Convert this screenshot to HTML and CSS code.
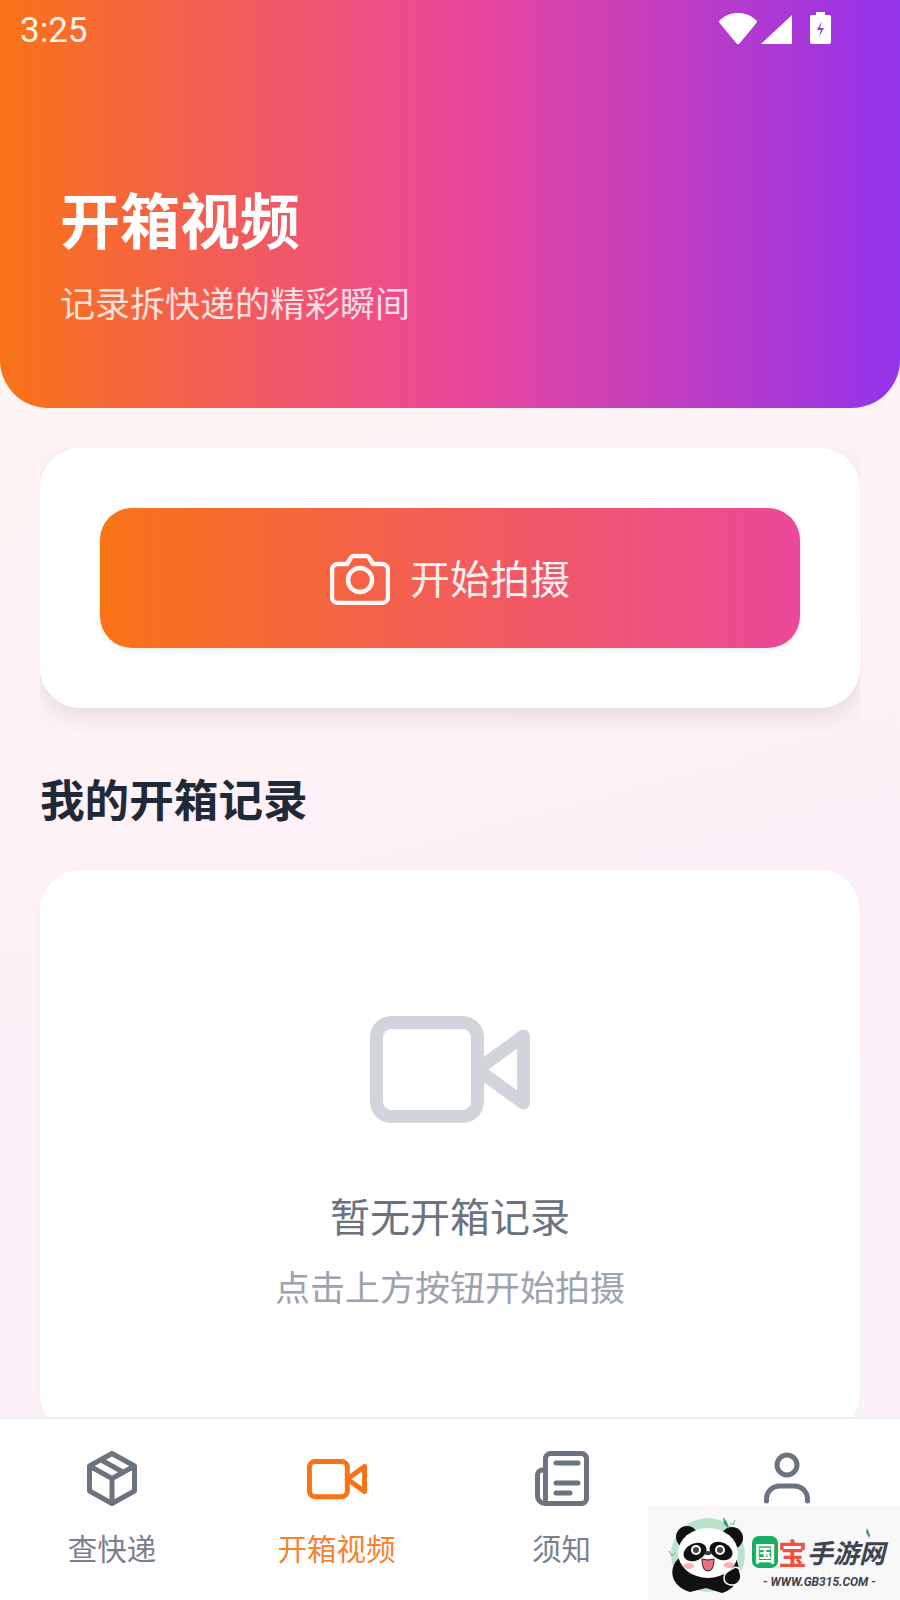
FILE: index.html
```html
<!DOCTYPE html>
<html lang="zh-CN">
<head>
<meta charset="utf-8">
<title>开箱视频</title>
<link rel="stylesheet" href="styles.css">
</head>
<body>
<div class="app">
  <header class="hero">
    <div class="status">
      <span class="time">3:25</span>
      <div class="status-icons">
        <svg class="ic-wifi" viewBox="0 0 38 32"><path d="M1 10.500C-.5 9 0 8 1 7 6 2.500 12 0 19 0s13 2.500 18 7c1 1 1.500 2 0 3.500L20.500 30.500c-.8 1-2.200 1-3 0z"/></svg>
        <svg class="ic-signal" viewBox="0 0 31 29"><path d="M31 0v29H0z"/></svg>
        <svg class="ic-battery" viewBox="0 0 21 32"><path class="bat" d="M6 0h9v3h4a2 2 0 0 1 2 2v25a2 2 0 0 1-2 2H2a2 2 0 0 1-2-2V5a2 2 0 0 1 2-2h4z"/><path class="bolt" d="M12 9l-5 9h4l-2 7 5-9h-4z"/></svg>
      </div>
    </div>
    <h1 class="hero-title">开箱视频</h1>
    <p class="hero-sub">记录拆快递的精彩瞬间</p>
  </header>

  <main class="content">
    <div class="clip">
      <section class="card action-card">
        <div class="shoot">
          <svg class="ic-camera" viewBox="0 0 60 52"><path d="M8 11H17L21 4.500a3 3 0 0 1 2.500-1.500H36.500a3 3 0 0 1 2.500 1.500L43 11H52a6 6 0 0 1 6 6V44a6 6 0 0 1-6 6H8a6 6 0 0 1-6-6V17a6 6 0 0 1 6-6z"/><circle cx="30" cy="27" r="12"/></svg>
          <span class="shoot-text">开始拍摄</span>
        </div>
      </section>
    </div>
    <h2 class="section-title">我的开箱记录</h2>
    <section class="card empty-card">
      <svg class="ic-video-lg" viewBox="0 0 160 107"><rect x="6.500" y="6.500" width="101" height="94" rx="15"/><path d="M107.500 53.500L153.500 20V87z"/></svg>
      <p class="empty-title">暂无开箱记录</p>
      <p class="empty-sub">点击上方按钮开始拍摄</p>
    </section>
  </main>

  <nav class="tabs">
    <div class="tab">
      <svg class="tab-icon" viewBox="0 0 60 60"><path d="M30 4.500L52.500 17V42L30 54.500L7.500 42V17zM30 29.500L52.500 17M30 29.500L7.500 17M30 29.500V54.500M18.750 10.750L41.250 23.250"/></svg>
      <span class="tab-label">查快递</span>
    </div>
    <div class="tab active">
      <svg class="tab-icon" viewBox="0 0 60 60"><g transform="translate(0 10) scale(.375)"><rect x="6.500" y="6.500" width="101" height="94" rx="15"/><path d="M107.500 53.500L153.500 20V87z"/></g></svg>
      <span class="tab-label">开箱视频</span>
    </div>
    <div class="tab">
      <svg class="tab-icon" viewBox="0 0 60 60"><path d="M13.500 50V9.500a5 5 0 0 1 5-5H49.500a5 5 0 0 1 5 5V49.500a5 5 0 0 1-5 5H13a7.500 7.500 0 0 1-7.500-7.500V26a5 5 0 0 1 5-5h3M24 14H46M24 34H46M24 44H38"/></svg>
      <span class="tab-label">须知</span>
    </div>
    <div class="tab">
      <svg class="tab-icon" viewBox="0 0 60 60"><circle cx="30" cy="16" r="10"/><path d="M9.500 52V50a13 13 0 0 1 13-13H37.500a13 13 0 0 1 13 13v2"/></svg>
    </div>
  </nav>

  <aside class="mark">
    <svg class="panda" viewBox="0 0 100 94">
      <circle class="ring" cx="60" cy="49" r="37"/>
      <path class="blk" d="M31 52C20 62 22 80 42 86l16-4 16 5c18-5 20-24 13-36z"/>
      <circle class="blk" cx="39" cy="31" r="11"/>
      <circle class="blk" cx="84" cy="32" r="11"/>
      <ellipse class="wht" cx="60" cy="47" rx="30" ry="25"/>
      <ellipse class="blk" cx="47" cy="46" rx="12" ry="8.500" transform="rotate(-25 47 46)"/>
      <ellipse class="blk" cx="73" cy="45" rx="12" ry="8.500" transform="rotate(25 73 45)"/>
      <circle class="wht" cx="48" cy="44" r="5"/>
      <circle class="wht" cx="72" cy="44" r="5"/>
      <circle class="eye" cx="48" cy="44" r="3"/>
      <circle class="eye" cx="72" cy="44" r="3"/>
      <ellipse class="nose" cx="60" cy="47" rx="3.500" ry="2"/>
      <path class="mouth" d="M54 53q6 2 12 0q0 12-6 12t-6-12z"/>
      <ellipse class="cheek" cx="41" cy="60" rx="5.500" ry="3"/>
      <ellipse class="cheek" cx="81" cy="59" rx="5.500" ry="3"/>
      <path class="paw" d="M76 72c0-6 5-7 8-9 3-3 8-2 8 3 2 5 1 8-2 11-5 4-14 2-14-5z"/>
      <path class="leaf" d="M79 16l-4-5 1 7 5 5z"/>
      <path class="twig" d="M87 14l-2 5-3-2M21 45l3 5 3-3"/>
    </svg>
    <div class="brand">
      <div class="brand-top">
        <span class="brand-box">国</span><span class="brand-red">宝</span><span class="brand-dark">手游网</span>
      </div>
      <div class="brand-url">- WWW.GB315.COM -</div>
    </div>
    <svg class="sprig" viewBox="0 0 16 14"><path d="M2 0l3 7-1 3-3-6z"/></svg>
  </aside>
</div>
</body>
</html>
```

FILE: styles.css
```css
* { box-sizing: border-box; }
html, body { margin: 0; padding: 0; }
body { font-family: "Noto Sans CJK SC", "Noto Sans", sans-serif; }
h1, h2, p { margin: 0; }

.app {
  position: relative;
  width: 900px;
  height: 1600px;
  overflow: hidden;
  display: flex;
  flex-direction: column;
  background: linear-gradient(165deg, #fff7f0, #fdf1f8 55%, #faf1fb);
}

.hero {
  flex: none;
  height: 408px;
  color: #fff;
  background: linear-gradient(90deg, #f97316, #ec4899 50%, #9333ea);
  border-radius: 0 0 48px 48px;
}
.status {
  height: 60px;
  padding: 10px 69px 0 20px;
  display: flex;
  justify-content: space-between;
}
.time { font: 400 35px/42px Roboto, sans-serif; opacity: .92; }
.status-icons { display: flex; align-items: flex-start; padding-top: 2px; }
.status-icons svg { fill: #fff; display: block; }
.ic-wifi { width: 38px; height: 32px; margin-top: 1px; }
.ic-signal { width: 31px; height: 29px; margin: 3px 0 0 4px; }
.ic-battery { width: 21px; height: 32px; margin-left: 18px; }
.status-icons .bolt { fill: #9a3ad8; }

.hero-title {
  margin: 118px 0 0 60px;
  font-size: 60px;
  line-height: 80px;
  font-weight: 700;
}
.hero-sub {
  margin: 19px 0 0 60px;
  font-size: 35px;
  line-height: 50px;
  opacity: .8;
}

.content {
  flex: 1;
  min-height: 0;
  overflow: hidden;
  padding: 40px 40px 0;
}
.clip { overflow: clip; padding-bottom: 24px; }
.card { background: #fff; border-radius: 40px; }
.action-card {
  padding: 60px;
  box-shadow: 0 8px 24px rgba(0, 0, 0, .1);
}
.shoot {
  height: 140px;
  border-radius: 32px;
  display: flex;
  align-items: center;
  justify-content: center;
  gap: 20px;
  color: #fff;
  font-size: 40px;
  background: linear-gradient(90deg, #f97316, #ec4899);
  box-shadow: 0 2px 6px rgba(0, 0, 0, .08);
}
.shoot-text { opacity: .9; padding-bottom: 2px; }
.ic-camera { width: 60px; height: 52px; margin-top: 1px; fill: none; stroke: #fff; stroke-width: 4.500; stroke-linejoin: round; opacity: .95; }

.section-title {
  margin-top: 36px;
  font-size: 44.600px;
  line-height: 60px;
  font-weight: 700;
  color: #1f2937;
}

.empty-card {
  margin-top: 42px;
  height: 565px;
  padding-top: 146px;
  display: flex;
  flex-direction: column;
  align-items: center;
  box-shadow: 0 1px 4px rgba(0, 0, 0, .03);
}
.ic-video-lg { width: 160px; height: 107px; fill: none; stroke: #d1d5db; stroke-width: 13; stroke-linejoin: round; }
.empty-title { margin-top: 64px; font-size: 40px; line-height: 56px; color: #6b7280; }
.empty-sub { margin-top: 18px; font-size: 35px; line-height: 50px; color: #9ca3af; }

.tabs {
  flex: none;
  height: 183px;
  background: #fff;
  border-top: 2px solid #eceef1;
  display: grid;
  grid-template-columns: 224px 225px 225px 226px;
}
.tab {
  padding-top: 30px;
  display: flex;
  flex-direction: column;
  align-items: center;
  color: #6b7280;
}
.tab-icon {
  width: 60px;
  height: 60px;
  fill: none;
  stroke: #6b7280;
  stroke-width: 5;
  stroke-linecap: round;
  stroke-linejoin: round;
}
.tab-label { margin-top: 18px; font-size: 29.500px; line-height: 40px; opacity: .9; }
.tab.active { color: #f97316; }
.tab.active .tab-icon { stroke: #f97316; }
.tab.active .tab-icon g { stroke-width: 13.300; }

.mark {
  position: absolute;
  right: 0;
  bottom: 0;
  width: 252px;
  height: 94px;
  background: #f8f8f8;
  display: flex;
}
.panda { width: 100px; height: 94px; flex: none; }
.panda .ring { fill: #b9e3ce; }
.panda .blk { fill: #111; }
.panda .wht { fill: #fff; }
.panda .eye { fill: #444; }
.panda .nose { fill: #3a3a3a; }
.panda .mouth { fill: #ee6f77; stroke: #222; stroke-width: 1; }
.panda .cheek { fill: #f8b4b0; }
.panda .paw { fill: #111; stroke: #fff; stroke-width: 1.500; }
.panda .leaf { fill: #2e9e6b; }
.panda .twig { fill: none; stroke: #6aa98a; stroke-width: 1; }
.brand { margin-left: 4px; padding-top: 28px; }
.brand-top { display: flex; align-items: center; height: 36px; }
.brand-box {
  width: 26px;
  height: 32px;
  border-radius: 7px;
  background: #19ad63;
  color: #fff;
  font-size: 21px;
  font-weight: 700;
  line-height: 32px;
  text-align: center;
}
.brand-red { font-size: 29px; font-weight: 700; color: #ef5340; line-height: 34px; }
.brand-dark { font-size: 26px; font-weight: 700; font-style: italic; color: #3d4450; line-height: 34px; }
.brand-url {
  margin: 5px 0 0 11px;
  font: italic 700 12px/14px Roboto, sans-serif;
  color: #3d4450;
  white-space: nowrap;
}
.sprig { position: absolute; left: 217px; top: 22px; width: 16px; height: 14px; fill: #2e9e6b; }
```
